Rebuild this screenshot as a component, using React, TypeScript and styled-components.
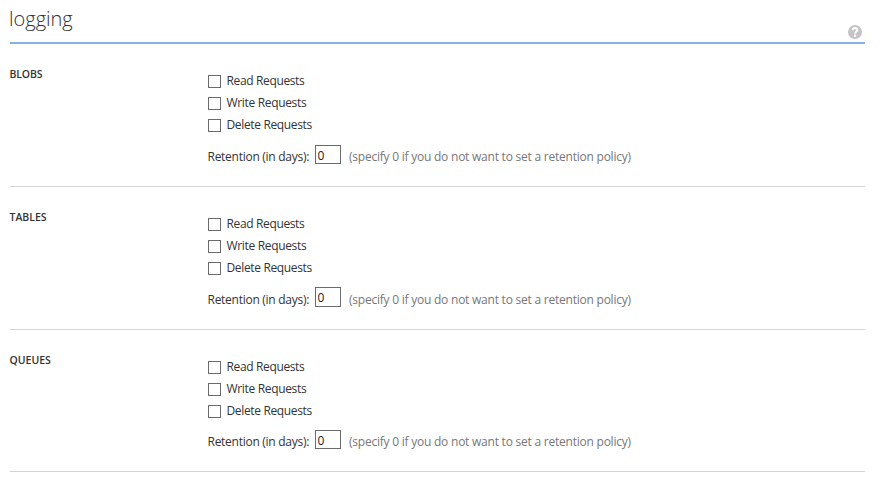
import React from "react";
import styled, { createGlobalStyle } from "styled-components";

const GlobalStyle = createGlobalStyle`
  * { box-sizing: border-box; }
  body {
    margin: 0;
    background: #fff;
    color: #333;
    font-family: "Open Sans", "Noto Sans", sans-serif;
    font-size: 12px;
  }
`;

const Page = styled.main`
  width: 855px;
  margin-left: 10px;
`;

const Header = styled.header`
  display: flex;
  justify-content: space-between;
  height: 44px;
  border-bottom: 2px solid #83b4e5;
`;

const Title = styled.h1`
  margin: 5px 0 0 -1px;
  font-size: 20px;
  font-weight: 300;
  line-height: 28px;
  letter-spacing: 0;
  color: #333;
`;

const HelpButton = styled.button`
  display: flex;
  width: 14px;
  height: 14px;
  margin: 25px 3px 0 0;
  padding: 0;
  border: 0;
  background: none;
`;

const Section = styled.section<{ $height: number }>`
  display: grid;
  grid-template-columns: 197.5px 1fr;
  height: ${(p) => p.$height}px;
  border-bottom: 1px solid #d3d3d3;
`;

const SectionTitle = styled.h2<{ $spacing: number }>`
  margin: 22px 0 0 -0.5px;
  font-size: 10.5px;
  font-weight: 600;
  line-height: 16px;
  letter-spacing: ${(p) => p.$spacing}px;
  white-space: nowrap;
`;

const Fields = styled.div`
  display: flex;
  flex-direction: column;
  padding-top: 26px;
`;

const CheckRow = styled.label`
  display: flex;
  align-items: center;
  height: 22px;
`;

const Checkbox = styled.input`
  appearance: none;
  width: 13px;
  height: 13px;
  margin: 1px 5.5px 0 0.5px;
  border: 1px solid #6b6b6b;
  background: #fff;
`;

const Text = styled.span<{ $spacing: number }>`
  line-height: 22px;
  letter-spacing: ${(p) => p.$spacing}px;
  white-space: nowrap;
`;

const RetentionRow = styled.div<{ $gap: number }>`
  display: flex;
  align-items: flex-start;
  margin-top: ${(p) => p.$gap}px;
`;

const RetentionLabel = styled.label<{ $drop: number }>`
  flex: 0 0 107.5px;
  padding-top: ${(p) => p.$drop}px;
  line-height: 22px;
  letter-spacing: -0.27px;
  white-space: nowrap;
`;

const DaysInput = styled.input<{ $height: number }>`
  width: 26px;
  height: ${(p) => p.$height}px;
  margin: 0 8px 0 0;
  padding: 1px 0 0 1.5px;
  border: 1px solid #6b6b6b;
  color: #222;
  font: 12px "Open Sans", "Noto Sans", sans-serif;
`;

const Hint = styled(Text)<{ $drop: number }>`
  padding-top: ${(p) => p.$drop}px;
  color: #777;
`;

const requests = [
  { name: "Read Requests", spacing: -0.36 },
  { name: "Write Requests", spacing: -0.33 },
  { name: "Delete Requests", spacing: -0.35 },
];

const services = [
  { name: "BLOBS", spacing: -0.15, height: 143, gap: 9, drop: 1, inputHeight: 19 },
  { name: "TABLES", spacing: 0, height: 143, gap: 8, drop: 2, inputHeight: 20 },
  { name: "QUEUES", spacing: 0, height: 142, gap: 8, drop: 1, inputHeight: 19 },
];

export default function App() {
  return (
    <>
      <GlobalStyle />
      <Page>
        <Header>
          <Title>logging</Title>
          <HelpButton aria-label="Help">
            <svg width="14" height="14" viewBox="0 0 14 14">
              <circle cx="7" cy="7" r="7" fill="#c4c4c4" />
              <path d="M4.6 5.2C4.6 2.4 9.4 2.4 9.4 5C9.4 6.6 7.1 6.6 7.1 8.6" fill="none" stroke="#fff" strokeWidth="2" />
              <rect x="6" y="9.6" width="2.2" height="2.2" fill="#fff" />
            </svg>
          </HelpButton>
        </Header>
        {services.map((s) => (
          <Section key={s.name} $height={s.height}>
            <SectionTitle $spacing={s.spacing}>{s.name}</SectionTitle>
            <Fields>
              {requests.map((r) => (
                <CheckRow key={r.name}>
                  <Checkbox type="checkbox" />
                  <Text $spacing={r.spacing}>{r.name}</Text>
                </CheckRow>
              ))}
              <RetentionRow $gap={s.gap}>
                <RetentionLabel htmlFor={s.name} $drop={s.drop}>Retention (in days):</RetentionLabel>
                <DaysInput id={s.name} defaultValue="0" $height={s.inputHeight} />
                <Hint $spacing={-0.23} $drop={s.drop}>(specify 0 if you do not want to set a retention policy)</Hint>
              </RetentionRow>
            </Fields>
          </Section>
        ))}
      </Page>
    </>
  );
}
